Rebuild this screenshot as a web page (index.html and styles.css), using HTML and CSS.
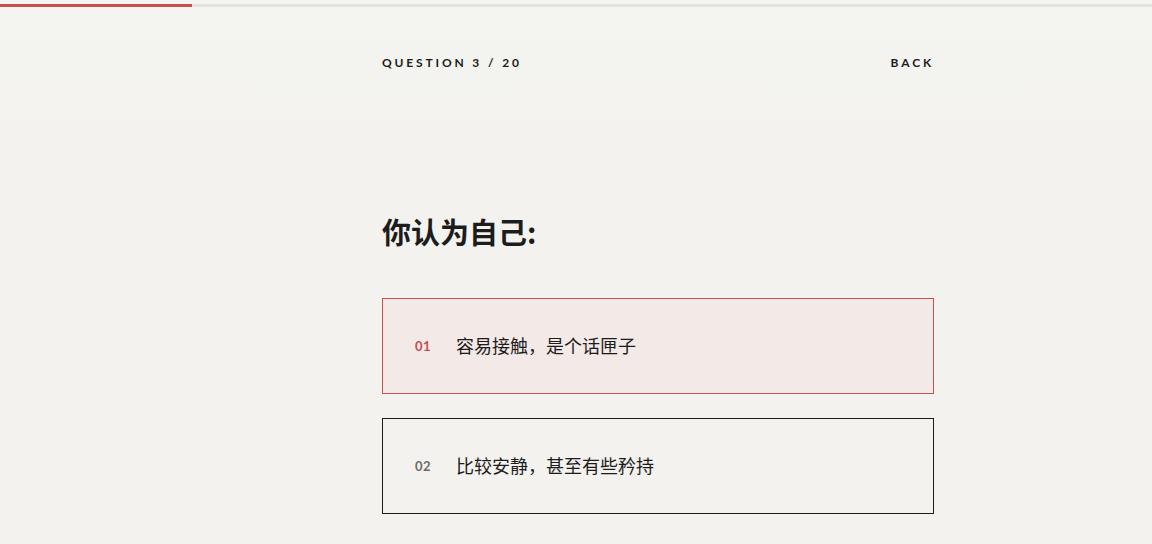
FILE: index.html
```html
<!DOCTYPE html>
<html lang="zh">
<head>
<meta charset="utf-8">
<link rel="stylesheet" href="styles.css">
</head>
<body>
<div class="progress"><div class="progress-fill"></div></div>
<main class="quiz">
  <header class="topbar">
    <span class="counter">QUESTION 3 / 20</span>
    <span class="back">BACK</span>
  </header>
  <h1 class="question">你认为自己:</h1>
  <div class="options">
    <div class="option selected"><span class="num">01</span><span class="label">容易接触，是个话匣子</span></div>
    <div class="option"><span class="num">02</span><span class="label">比较安静，甚至有些矜持</span></div>
  </div>
</main>
</body>
</html>
```
FILE: styles.css
```css
html, body { margin: 0; padding: 0; }
body {
  background: linear-gradient(#f4f4f1 0, #f3f2ee 160px);
  font-family: "Lato", "Noto Sans CJK SC", sans-serif;
  color: #1c1c1c;
  height: 544px;
  overflow: hidden;
}
.progress {
  margin-top: 4px;
  height: 3px;
  background: #e2e2e0;
}
.progress-fill {
  width: 192px;
  height: 3px;
  background: #c9514c;
}
.quiz {
  width: 552px;
  margin-left: 382px;
}
.topbar {
  display: flex;
  justify-content: space-between;
  padding-top: 49px;
  font-size: 12px;
  font-weight: 700;
  letter-spacing: 2.85px;
  line-height: 14px;
  color: #1c1c1c;
}
.back { margin-right: 0; }
.question {
  margin: 141px 0 0;
  font-family: "Noto Sans CJK SC", sans-serif;
  font-size: 29px;
  font-weight: 700;
  line-height: 40px;
  color: #1c1c1c;
}
.options {
  margin-top: 47px;
  display: flex;
  flex-direction: column;
  gap: 24px;
}
.option {
  box-sizing: border-box;
  height: 96px;
  border: 1px solid #1c1c1c;
  display: flex;
  align-items: center;
  padding-left: 32px;
}
.option.selected {
  border-color: #c9514c;
  background: #f3e9e7;
}
.num {
  width: 41px;
  font-size: 13px;
  font-weight: 700;
  color: #6b6b6b;
  letter-spacing: 0.5px;
}
.selected .num { color: #c0504d; }
.label {
  font-family: "Noto Sans CJK SC", sans-serif;
  font-size: 18px;
  line-height: 24px;
  margin-top: -2px;
  color: #1c1c1c;
}
```
